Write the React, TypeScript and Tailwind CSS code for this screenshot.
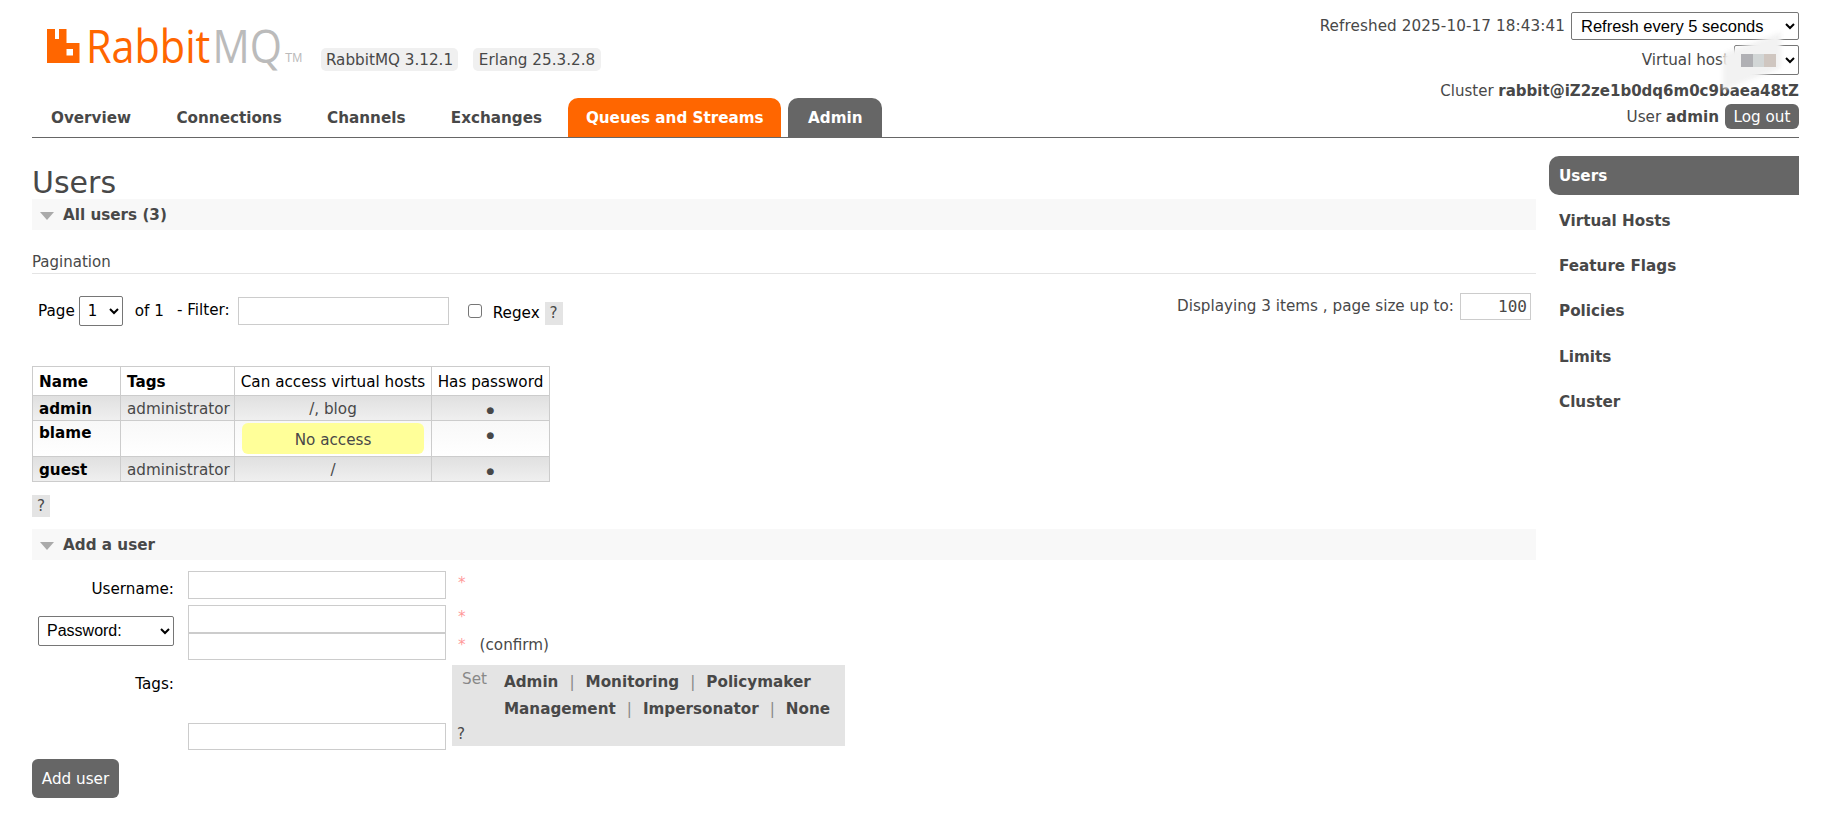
import React from "react";

const Logo = () => (
  <svg width="260" height="64" viewBox="0 -16 260 64" className="block">
    <path fill="#ff6600" fillRule="evenodd" d="M0 0h8v10h4V0h7.5v14H32.5v20H0z M19.5 20h6.5v6.5h-6.5z" />
    <g transform="scale(0.9 1)" fontFamily="'Open Sans', sans-serif" fontSize="46">
      <text x="43.3" y="34" fill="#ff6600">Rabbit</text>
      <text x="183.8" y="34" fill="#bbbbbb">MQ</text>
    </g>
    <text x="238" y="33" fontFamily="'Liberation Sans', sans-serif" fontSize="12" fill="#bbbbbb">TM</text>
  </svg>
);

const Tab = ({ label, tone, cls = "" }: { label: string; tone?: "orange" | "gray"; cls?: string }) => {
  if (tone === "orange")
    return <a className="flex h-[39px] w-[213px] items-center justify-center rounded-t-[10px] bg-[#ff6600] font-bold text-white">{label}</a>;
  if (tone === "gray")
    return <a className="ml-[7px] flex h-[39px] w-[94px] items-center justify-center rounded-t-[10px] bg-[#666666] font-bold text-white">{label}</a>;
  return <a className={`flex h-[39px] items-center px-[22.7px] font-bold text-[#484848] ${cls}`}>{label}</a>;
};

const SectionHead = ({ label }: { label: string }) => (
  <div className="flex h-[31px] items-center bg-[#f8f8f8] pl-[8px] font-bold text-[#484848]">
    <span className="mr-[9px] mt-[2px] h-0 w-0 border-x-[7px] border-t-[8px] border-x-transparent border-t-[#aaaaaa]" />
    <span>{label}</span>
  </div>
);

const Field = ({ h = "h-[28px]", cls = "" }: { h?: string; cls?: string }) => (
  <input readOnly className={`block w-[258px] border border-[#cccccc] bg-white outline-none ${h} ${cls}`} />
);

const Star = () => <span className="text-[#ff9999]">*</span>;

const Dot = () => <span className="text-[9px] leading-[20px]">●</span>;

const side = ["Virtual Hosts", "Feature Flags", "Policies", "Limits", "Cluster"];

const Pipe = () => <span className="mx-[11px] font-normal text-[#888888]">|</span>;

const cell = "border border-[#cccccc] pt-[2px]";

export default function App() {
  return (
    <div className="relative h-[820px] w-[1826px] overflow-hidden bg-white pl-[32px] pr-[27px] font-['DejaVu_Sans',sans-serif] text-[15.2px] leading-[20px] text-[#484848]">
      {/* header */}
      <header className="flex h-[138px] justify-between border-b border-[#666666]">
        <div className="flex flex-col">
          <div className="flex h-[98px] shrink-0 items-start pl-[15px] pt-[13px]">
            <div className="w-[274px] shrink-0"><Logo /></div>
            <span className="mt-[35px] flex h-[23px] w-[137px] items-center justify-center rounded-[5px] bg-[#f0f0f0]">RabbitMQ 3.12.1</span>
            <span className="ml-[15px] mt-[35px] flex h-[23px] w-[128px] items-center justify-center rounded-[5px] bg-[#f0f0f0]">Erlang 25.3.2.8</span>
          </div>
          <nav className="ml-[-3.7px] flex">
            <Tab label="Overview" />
            <Tab label="Connections" />
            <Tab label="Channels" />
            <Tab label="Exchanges" cls="mr-[3.5px]" />
            <Tab label="Queues and Streams" tone="orange" />
            <Tab label="Admin" tone="gray" />
          </nav>
        </div>
        <div className="flex flex-col items-end pt-[12px]">
          <div className="flex h-[28px] items-center">
            <span className="mr-[6px] tracking-[0.1px]">Refreshed 2025-10-17 18:43:41</span>
            <select className="h-[28px] w-[228px] rounded-[2px] border border-[#767676] bg-white pl-[5px] font-['Liberation_Sans',sans-serif] text-[16.5px] text-black">
              <option>Refresh every 5 seconds</option>
            </select>
          </div>
          <div className="relative mt-[5px] flex h-[30px] items-center">
            <span className="mr-[5px]">Virtual host</span>
            <select className="h-[30px] w-[65px] rounded-[2px] border border-[#767676] bg-white text-[16px] text-black">
              <option>&nbsp;</option>
            </select>
            <div className="absolute right-[18px] top-[-2px] h-[36px] w-[58px] -skew-y-[20deg] bg-[#f2f2f2] blur-[2px]" />
            <div className="absolute right-[23px] top-[9px] flex h-[13px]">
              <span className="w-[12px] bg-[#b0b0b4]" />
              <span className="w-[11px] bg-[#d2d6d6]" />
              <span className="w-[12px] bg-[#cfc6c0]" />
            </div>
          </div>
          <div className="mt-[6px] h-[20px] text-[15px]">Cluster <b>rabbit@iZ2ze1b0dq6m0c9baea48tZ</b></div>
          <div className="mt-[3px] flex h-[25px] items-center">
            <span className="mr-[6px]">User <b>admin</b></span>
            <button className="h-[25px] w-[74px] rounded-[6px] bg-[#666666] text-white">Log out</button>
          </div>
        </div>
      </header>

      <div className="flex">
        {/* main */}
        <main className="w-[1504px] shrink-0">
          <h1 className="h-[43px] pt-[27px] text-[30px] leading-[36px] text-[#484848]">Users</h1>
          <div className="h-[18px]" />
          <SectionHead label="All users (3)" />
          <div className="mt-[23px] h-[20px] text-[15px] leading-[18px] text-[#484848]">Pagination</div>
          <div className="h-[1px] bg-[#e4e4e4]" />

          <div className="mt-[20px] flex h-[34px] items-center justify-between pl-[6px] pr-[5px] text-black">
            <div className="flex items-center">
              <span>Page</span>
              <select className="ml-[4px] h-[30px] w-[44px] rounded-[2px] border border-[#767676] bg-white pl-[4px] text-[15px]"><option>1</option></select>
              <span className="ml-[12px]">of 1</span>
              <span className="mb-[3px] ml-[13px]">- Filter:</span>
              <input readOnly className="ml-[8px] h-[28px] w-[211px] border border-[#cccccc] bg-white outline-none" />
              <input type="checkbox" readOnly className="ml-[19px] h-[14px] w-[14px] appearance-none rounded-[3px] border border-[#767676] bg-white" />
              <span className="ml-[11px] mt-[4px]">Regex</span>
              <span className="ml-[5px] mt-[4px] flex h-[23px] w-[18px] items-center justify-center bg-[#e4e4e4] text-[#484848]">?</span>
            </div>
            <div className="mb-[10px] flex items-center text-[#484848]">
              <span className="mr-[6px]">Displaying 3 items , page size up to:</span>
              <input readOnly value="100" className="h-[27px] w-[71px] border border-[#cccccc] pr-[3px] text-right font-['DejaVu_Sans_Mono',monospace] text-[16px] outline-none" />
            </div>
          </div>

          <table className="mt-[38px] border-collapse">
            <thead>
              <tr className="h-[29px] text-black">
                <th className={`w-[88px] pl-[6px] text-left font-bold ${cell}`}>Name</th>
                <th className={`w-[114px] pl-[6px] text-left font-bold ${cell}`}>Tags</th>
                <th className={`w-[197px] text-center font-normal ${cell}`}>Can access virtual hosts</th>
                <th className={`w-[118px] text-center font-normal ${cell}`}>Has password</th>
              </tr>
            </thead>
            <tbody>
              <tr className="h-[24px] bg-gradient-to-b from-[#e0e0e0] to-[#f0f0f0]">
                <td className={`pl-[6px] font-bold text-black ${cell}`}>admin</td>
                <td className={`pl-[6px] ${cell}`}>administrator</td>
                <td className={`text-center ${cell}`}>/, blog</td>
                <td className={`text-center ${cell}`}><Dot /></td>
              </tr>
              <tr className="h-[36px] bg-gradient-to-b from-[#f8f8f8] to-white">
                <td className={`pl-[6px] align-top font-bold text-black ${cell}`}>blame</td>
                <td className={cell}></td>
                <td className="border border-[#cccccc] px-[7px] py-[2px]">
                  <div className="flex h-[31px] items-center justify-center rounded-[6px] bg-[#ffff99] pt-[2px]">No access</div>
                </td>
                <td className={`text-center align-top ${cell}`}><Dot /></td>
              </tr>
              <tr className="h-[24px] bg-gradient-to-b from-[#e0e0e0] to-[#f0f0f0]">
                <td className={`pl-[6px] font-bold text-black ${cell}`}>guest</td>
                <td className={`pl-[6px] ${cell}`}>administrator</td>
                <td className={`text-center ${cell}`}>/</td>
                <td className={`text-center ${cell}`}><Dot /></td>
              </tr>
            </tbody>
          </table>

          <span className="mt-[13px] flex h-[22px] w-[18px] items-center justify-center bg-[#e4e4e4]">?</span>
          <div className="h-[12px]" />
          <SectionHead label="Add a user" />

          <form className="mt-[11px]">
            <div className="flex">
              <div className="flex h-[28px] w-[142px] items-center justify-end pt-[7px] text-black">Username:</div>
              <Field cls="ml-[14px]" />
              <span className="ml-[12px] mt-[2px]"><Star /></span>
            </div>
            <div className="mt-[6px] flex">
              <div className="flex w-[142px] items-center justify-end">
                <select className="mb-[4px] h-[30px] w-[136px] rounded-[2px] border border-[#767676] bg-white pl-[4px] font-['Liberation_Sans',sans-serif] text-[16px] text-black"><option>Password:</option></select>
              </div>
              <div className="ml-[14px] flex flex-col">
                <Field />
                <Field h="h-[27px]" />
              </div>
              <div className="ml-[12px] flex flex-col">
                <span className="mt-[2px] h-[28px]"><Star /></span>
                <span><Star /><span className="ml-[14px]">(confirm)</span></span>
              </div>
            </div>
            <div className="mt-[5px] flex">
              <div className="w-[142px] pt-[9px] text-right text-black">Tags:</div>
              <div className="ml-[14px] flex h-[85px] flex-col justify-end"><Field h="h-[27px]" /></div>
              <div className="relative ml-[6px] h-[81px] w-[393px] bg-[#e4e4e4] pl-[10px] pt-[4px]">
                <div className="flex">
                  <span className="mr-[17px] text-[#888888]">Set</span>
                  <div className="font-bold leading-[27px]">
                    <div>Admin<Pipe />Monitoring<Pipe />Policymaker</div>
                    <div>Management<Pipe />Impersonator<Pipe />None</div>
                  </div>
                </div>
                <span className="absolute bottom-[2px] left-[5px]">?</span>
              </div>
            </div>
            <button type="button" className="mt-[9px] h-[39px] w-[87px] rounded-[6px] bg-[#666666] text-white">Add user</button>
          </form>
        </main>

        {/* side nav */}
        <aside className="ml-[13px] w-[250px] pt-[18px] font-bold text-[#484848]">
          <div className="mb-[3px] flex h-[39px] items-center rounded-l-[10px] bg-[#666666] pl-[10px] text-white">Users</div>
          {side.map((s) => (
            <div key={s} className="flex h-[45.3px] items-center pl-[10px]">{s}</div>
          ))}
        </aside>
      </div>
    </div>
  );
}
